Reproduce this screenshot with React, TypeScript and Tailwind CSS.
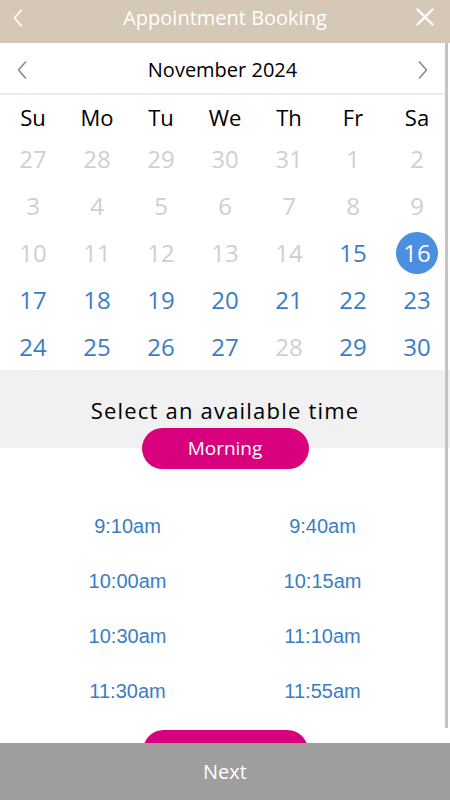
import React from 'react';

const weekDays = ['Su', 'Mo', 'Tu', 'We', 'Th', 'Fr', 'Sa'];

// day number + whether it can be picked
const weeks: { day: number; available: boolean }[][] = [
  [27, 28, 29, 30, 31, 1, 2].map((d) => ({ day: d, available: false })),
  [3, 4, 5, 6, 7, 8, 9].map((d) => ({ day: d, available: false })),
  [10, 11, 12, 13, 14, 15, 16].map((d) => ({ day: d, available: d >= 15 })),
  [17, 18, 19, 20, 21, 22, 23].map((d) => ({ day: d, available: true })),
  [24, 25, 26, 27, 28, 29, 30].map((d) => ({ day: d, available: d !== 28 })),
];

const selectedDay = 16;

const times = ['9:10am', '9:40am', '10:00am', '10:15am', '10:30am', '11:10am', '11:30am', '11:55am'];

function Chevron({ dir, className }: { dir: 'left' | 'right'; className?: string }) {
  return (
    <svg width="10" height="18" viewBox="0 0 10 18" fill="none" className={className}>
      <path
        d={dir === 'left' ? 'M8.5 1 L1.5 9 L8.5 17' : 'M1.5 1 L8.5 9 L1.5 17'}
        stroke="currentColor"
        strokeWidth="1.6"
        strokeLinecap="round"
        strokeLinejoin="round"
      />
    </svg>
  );
}

export default function App() {
  return (
    <div
      className="flex h-[800px] w-[450px] flex-col overflow-hidden bg-white"
      style={{ fontFamily: '"Open Sans", "Liberation Sans", sans-serif' }}
    >
      <header className="flex h-[43px] shrink-0 items-center bg-[#d6c8b7] px-[13px] text-white">
        <div className="w-[30px]">
          <Chevron dir="left" className="mb-[8px]" />
        </div>
        <h1 className="mb-[8px] flex-1 text-center text-[20px] leading-none">Appointment Booking</h1>
        <div className="flex w-[30px] justify-end">
          <svg width="18" height="18" viewBox="0 0 18 18" className="mb-[10px] mr-[3px]">
            <path d="M1.5 1.5 L16.5 16.5 M16.5 1.5 L1.5 16.5" stroke="currentColor" strokeWidth="2.4" strokeLinecap="round" />
          </svg>
        </div>
      </header>

      <div className="relative flex-1 overflow-hidden">
        <div className="flex h-[52px] w-[445px] items-center justify-between border-b-2 border-[#ebebeb] px-[17px] pt-[3px] text-[#8a8a8a]">
          <Chevron dir="left" />
          <span className="text-[20px] text-black">November 2024</span>
          <Chevron dir="right" />
        </div>

        <div className="px-[1px]">
          <div className="grid h-[40px] grid-cols-7 items-center pt-[4px] text-[22px] text-black">
            {weekDays.map((d) => (
              <span key={d} className="text-center">
                {d}
              </span>
            ))}
          </div>

          {weeks.map((week, i) => (
            <div key={i} className="grid h-[47px] grid-cols-7 items-center text-[24px]">
              {week.map(({ day, available }) => (
                <div key={day} className="flex justify-center">
                  {available && day === selectedDay ? (
                    <span className="flex h-[42px] w-[42px] items-center justify-center rounded-full bg-[#4a8fe0] text-white">
                      {day}
                    </span>
                  ) : (
                    <span className={available ? 'text-[#3b7dc4]' : 'text-[#cfcfcf]'}>{day}</span>
                  )}
                </div>
              ))}
            </div>
          ))}
        </div>

        <div className="flex h-[78px] items-center justify-center bg-[#f1f1f1] pt-[2px]">
          <span className="text-[22px] tracking-[1.2px] text-black">Select an available time</span>
        </div>
        <div className="relative -mt-[20px] flex justify-center">
          <button className="h-[41px] w-[167px] rounded-full bg-[#d9007e] text-[19px] text-white">Morning</button>
        </div>

        <div
          className="mt-[29px] grid grid-cols-2 px-[30px] text-[20px] text-[#3b7dc4]"
          style={{ fontFamily: '"Liberation Sans", Arial, sans-serif' }}
        >
          {times.map((t) => (
            <div key={t} className="flex h-[55px] items-center justify-center">
              {t}
            </div>
          ))}
        </div>

        <div className="mt-[12px] flex justify-center">
          <div className="h-[41px] w-[165px] rounded-full bg-[#d9007e]" />
        </div>

        <div className="absolute right-[2px] top-0 h-[685px] w-[3px] bg-[#c4c4c4]" />
      </div>

      <footer className="flex h-[57px] shrink-0 items-center justify-center bg-[#9e9e9e] text-[20px] text-white">
        Next
      </footer>
    </div>
  );
}
